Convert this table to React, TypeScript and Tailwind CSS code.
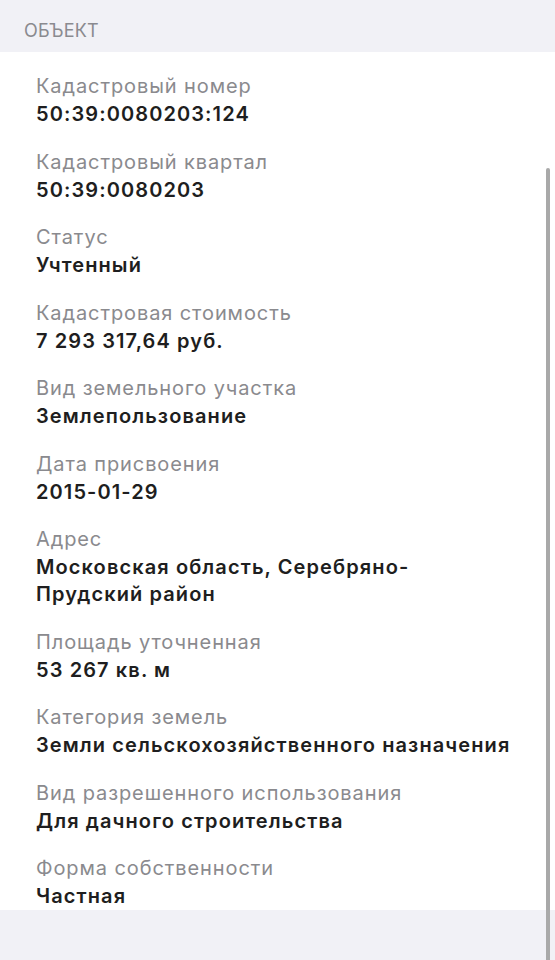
import React from "react";

const items: { label: string; value: string[] }[] = [
  { label: "Кадастровый номер", value: ["50:39:0080203:124"] },
  { label: "Кадастровый квартал", value: ["50:39:0080203"] },
  { label: "Статус", value: ["Учтенный"] },
  { label: "Кадастровая стоимость", value: ["7 293 317,64 руб."] },
  { label: "Вид земельного участка", value: ["Землепользование"] },
  { label: "Дата присвоения", value: ["2015-01-29"] },
  { label: "Адрес", value: ["Московская область, Серебряно-", "Прудский район"] },
  { label: "Площадь уточненная", value: ["53 267 кв. м"] },
  { label: "Категория земель", value: ["Земли сельскохозяйственного назначения"] },
  { label: "Вид разрешенного использования", value: ["Для дачного строительства"] },
  { label: "Форма собственности", value: ["Частная"] },
];

export default function App() {
  return (
    <div
      className="relative w-[555px] h-[960px] bg-[#f1f1f6] overflow-hidden"
      style={{ fontFamily: "Inter, 'Noto Sans', sans-serif" }}
    >
      <div className="h-[52px] px-6 pt-[19px] text-[18px] leading-[24px] text-[#8a8a8f] tracking-[0.2px]">
        ОБЪЕКТ
      </div>
      <div className="bg-white pt-[20px] pl-9 flex flex-col gap-[19.5px]">
        {items.map((it) => (
          <div key={it.label} className="flex flex-col">
            <div className="text-[20px] leading-[29px] tracking-[0.9px] text-[#8a8a8e] whitespace-nowrap">
              {it.label}
            </div>
            {it.value.map((v) => (
              <div
                key={v}
                className="text-[20px] leading-[27px] font-semibold tracking-[1.1px] text-[#1e1e20] whitespace-nowrap"
              >
                {v}
              </div>
            ))}
          </div>
        ))}
      </div>
      <div className="absolute left-[546px] top-[168px] w-[4px] h-[800px] rounded-t-full bg-[#a9a9a9]" />
    </div>
  );
}
